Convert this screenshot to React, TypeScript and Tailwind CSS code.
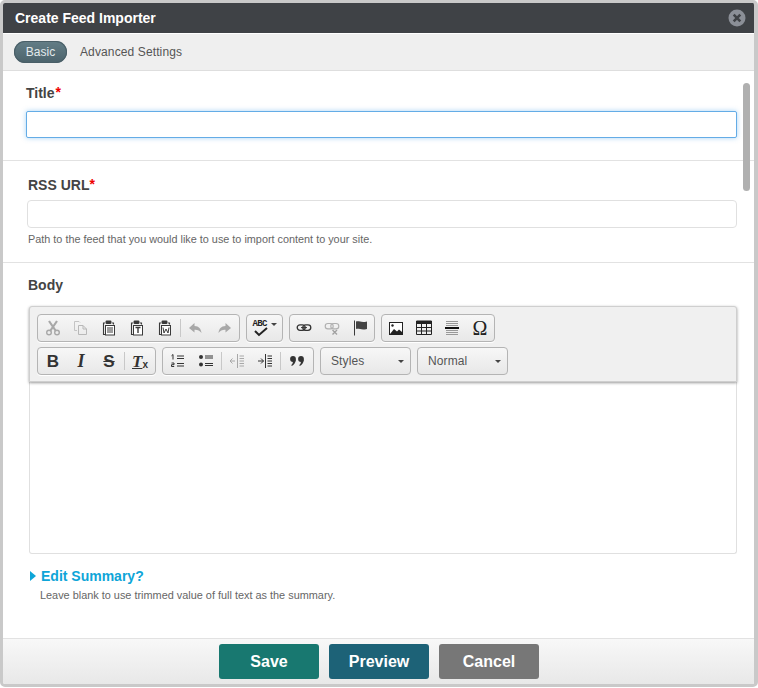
import React from "react";

const D = "#3a3a3a";
const G = "#a8a8a8";
const Ic = ({ children }: { children: React.ReactNode }) => (
  <svg width="16" height="16" viewBox="0 0 16 16" fill="none">{children}</svg>
);
const Cut = () => (
  <Ic>
    <path d="M4 1 L10.5 10.5 M12 1 L5.5 10.5" stroke={G} strokeWidth="2.2" />
    <circle cx="4" cy="12.5" r="2.3" stroke={G} strokeWidth="1.4" />
    <circle cx="12" cy="12.5" r="2.3" stroke={G} strokeWidth="1.4" />
  </Ic>
);
const Copy = () => (
  <Ic>
    <path d="M1.5 1.5 H6 L7 2.5 M1.5 1.5 V10.5 H4" stroke="#c4c4c4" />
    <path d="M5.5 5.5 H10 L13.5 9 V14.5 H5.5 Z M10 5.5 V9 H13.5" stroke="#b8b8b8" />
  </Ic>
);
const Paste = ({ mark }: { mark: "lines" | "T" | "W" }) => (
  <Ic>
    <path d="M4 3 H2.5 V14.5 H4 M11 3 H12.5 V4.5" stroke={D} strokeWidth="1.1" />
    <rect x="4.5" y="0.5" width="6" height="3.5" rx="1.2" fill={D} />
    <rect x="4.5" y="5.5" width="9" height="9.5" fill="#fff" stroke={D} />
    {mark === "lines" && <path d="M6 8 H12 M6 10 H12 M6 12 H12" stroke={D} />}
    {mark === "T" && <path d="M6.5 7.5 H11.5 M9 7.5 V13" stroke={D} strokeWidth="1.4" />}
    {mark === "W" && <path d="M6 7.5 L7 13 L9 9 L11 13 L12 7.5" stroke={D} />}
  </Ic>
);
const Undo = () => (
  <Ic>
    <path d="M6.5 3 L1 8 L6.5 12.5 V9.7 C9.5 9.5 11.5 10.5 13.5 13 C13 9 11 6.2 6.5 6 Z" fill={G} />
  </Ic>
);
const Redo = () => (
  <Ic>
    <path d="M9.5 3 L15 8 L9.5 12.5 V9.7 C6.5 9.5 4.5 10.5 2.5 13 C3 9 5 6.2 9.5 6 Z" fill={G} />
  </Ic>
);
const Link = () => (
  <Ic>
    <rect x="1.2" y="4.8" width="8" height="5.6" rx="2.8" stroke="#333" strokeWidth="1.3" />
    <rect x="6.8" y="4.8" width="8" height="5.6" rx="2.8" stroke="#333" strokeWidth="1.3" />
    <path d="M5 7.6 H11" stroke="#333" />
  </Ic>
);
const Unlink = () => (
  <Ic>
    <rect x="1.2" y="3.5" width="8" height="5.4" rx="2.7" stroke="#b0b0b0" strokeWidth="1.1" />
    <rect x="6.8" y="3.5" width="8" height="5.4" rx="2.7" stroke="#b0b0b0" strokeWidth="1.1" />
    <path d="M8.5 10 L13 14.5 M13 10 L8.5 14.5" stroke="#a0a0a0" strokeWidth="1.4" />
  </Ic>
);
const Flag = () => (
  <Ic>
    <path d="M2.5 0.5 V15.5" stroke={D} />
    <path d="M4 1.5 C7 0.5 9 3 15 1.5 V9 C9 10.5 7 8 4 9 Z" fill="#444" />
  </Ic>
);
const Image = () => (
  <Ic>
    <rect x="1.5" y="2.5" width="13" height="12" fill="#fff" stroke="#222" />
    <path d="M2 14 L6 9 L9 11.5 L11 9.5 L14 12 V14 Z" fill="#222" />
    <circle cx="4.5" cy="5.5" r="1.2" fill="#222" />
  </Ic>
);
const Table = () => (
  <Ic>
    <rect x="0.5" y="1" width="15" height="3" fill="#222" />
    <path d="M0.5 1 H15.5 V14.5 H0.5 Z M0.5 7.5 H15.5 M0.5 11 H15.5 M5.5 4 V14.5 M10.5 4 V14.5" stroke="#222" />
  </Ic>
);
const HR = () => (
  <Ic>
    <path d="M2 1.5 H14 M2 3.5 H14 M2 5.5 H14 M2 10.5 H14 M2 12.5 H14 M2 14.5 H14" stroke="#999" />
    <path d="M1 8 H15" stroke="#111" strokeWidth="2" />
  </Ic>
);
const OL = () => (
  <Ic>
    <path d="M7 3 H14 M7 5.5 H14 M7 10.5 H14 M7 13 H14" stroke="#333" strokeWidth="1.2" />
    <path d="M3 1.5 V6.5 M1.5 2.8 L3 1.5" stroke="#333" />
    <path d="M1.5 10 H4 V11.7 H1.5 V13.5 H4.2" stroke="#333" />
  </Ic>
);
const UL = () => (
  <Ic>
    <circle cx="3" cy="4" r="2" fill="#333" />
    <circle cx="3" cy="11.5" r="2" fill="#333" />
    <path d="M7 3 H15 M7 5 H15 M7 10.5 H15 M7 12.5 H15" stroke="#333" />
  </Ic>
);
const Outdent = () => (
  <Ic>
    <path d="M8.5 1 V15" stroke={G} />
    <path d="M10.5 3 H15 M10.5 5.5 H15 M10.5 8 H15 M10.5 10.5 H15 M10.5 13 H15" stroke={G} />
    <path d="M1 8 H6 M1 8 L3.5 5.5 M1 8 L3.5 10.5" stroke={G} />
  </Ic>
);
const Indent = () => (
  <Ic>
    <path d="M8.5 1 V15" stroke="#333" />
    <path d="M10.5 3 H15 M10.5 5.5 H15 M10.5 8 H15 M10.5 10.5 H15 M10.5 13 H15" stroke="#333" />
    <path d="M1 8 H6.5 M6.5 8 L4 5.5 M6.5 8 L4 10.5" stroke="#333" />
  </Ic>
);
const Quote = () => (
  <Ic>
    <circle cx="4" cy="6" r="2.9" fill="#333" />
    <path d="M6.8 6.5 C6.8 9.5 5 12 2.8 13 L2.3 12 C3.6 11 4 9.5 4 8 Z" fill="#333" />
    <circle cx="12" cy="6" r="2.9" fill="#333" />
    <path d="M14.8 6.5 C14.8 9.5 13 12 10.8 13 L10.3 12 C11.6 11 12 9.5 12 8 Z" fill="#333" />
  </Ic>
);
const Caret = () => <span className="border-x-[3px] border-t-[3px] border-x-transparent border-t-[#444]" />;

const Btn = ({ children, w = "w-[28px]" }: { children: React.ReactNode; w?: string }) => (
  <span className={`flex h-full items-center justify-center ${w}`}>{children}</span>
);
const Sep = () => <span className="mx-[1px] h-[18px] w-px shrink-0 bg-[#c8c8c8]" />;
const Group = ({ children, flush }: { children: React.ReactNode; flush?: boolean }) => (
  <div
    className={`flex h-[28px] items-center rounded-[4px] border border-[#b4b4b4] bg-linear-to-b from-[#f7f7f7] to-[#e8e8e8] shadow-[0_1px_0_#fff] ${flush ? "" : "px-px"}`}
  >
    {children}
  </div>
);
const Combo = ({ label }: { label: string }) => (
  <div className="flex h-[28px] w-[91px] items-center justify-between rounded-[4px] border border-[#b4b4b4] bg-linear-to-b from-[#f7f7f7] to-[#e8e8e8] pr-[6px] pl-[10px] text-[12px] tracking-[0.1px] text-[#555]">
    {label}
    <Caret />
  </div>
);
const Req = ({ gap }: { gap?: boolean }) => (
  <span className={`relative -top-[1px] text-[#ee0000] ${gap ? "ml-px" : ""}`}>*</span>
);

export default function App() {
  return (
    <div className="h-[688px] w-[758px] bg-white font-['Liberation_Sans',Arial,sans-serif] text-[#444]">
      <div className="flex h-[687px] flex-col overflow-hidden rounded-[5px] border-[3px] border-r-4 border-[#c9c9c9] bg-white">
        <header className="flex h-[30px] shrink-0 items-center justify-between bg-[#3f4246] pr-[8px] pl-[12px]">
          <h1 className="text-[14px] font-bold text-white">Create Feed Importer</h1>
          <svg width="18" height="18" viewBox="0 0 18 18">
            <circle cx="9" cy="9" r="8.5" fill="#8b8f97" />
            <path d="M5.7 5.7 L12.3 12.3 M12.3 5.7 L5.7 12.3" stroke="#3f4246" strokeWidth="2.6" />
          </svg>
        </header>
        <nav className="mt-px flex h-[37px] shrink-0 items-center gap-[13px] border-b border-[#dedede] bg-[#efefef] pl-[11px] text-[12px]">
          <span className="flex h-[22px] w-[53px] items-center justify-center rounded-full bg-linear-to-b from-[#647e87] to-[#4c636c] text-[#e4eaec] shadow-[inset_0_0_0_1px_#4a5f68]">
            Basic
          </span>
          <span className="tracking-[0.12px] text-[#555]">Advanced Settings</span>
        </nav>
        <main className="relative min-h-0 flex-1 bg-white">
          <section className="h-[90px] border-b border-[#e2e2e2] pt-[13px] pr-[17px] pl-[23px]">
            <label className="block text-[14px] leading-[18px] font-bold">Title<Req gap /></label>
            <input className="mt-[9px] block h-[27px] w-full rounded-[2px] border border-[#64ace6] bg-white shadow-[0_0_5px_rgba(82,168,236,0.5)] outline-none" />
          </section>
          <section className="h-[102px] border-b border-[#e2e2e2] pt-[15px] pr-[17px] pl-[24px]">
            <label className="block pl-px text-[14px] leading-[18px] font-bold">RSS URL<Req /></label>
            <input className="mt-[6px] block h-[28px] w-full rounded-[4px] border border-[#e0e0e0] bg-white outline-none" />
            <p className="mt-[4px] pl-px text-[10.85px] leading-[14px] text-[#666]">
              Path to the feed that you would like to use to import content to your site.
            </p>
          </section>
          <section className="pt-[13px] pr-[17px] pl-[26px]">
            <label className="-ml-px block h-[18px] text-[14px] leading-[18px] font-bold">Body</label>
            <div className="relative z-10 mt-[12px] flex h-[76px] flex-col gap-[5px] rounded-t-[3px] border border-[#cfcfcf] bg-[#f0f0f0] pt-[7px] pl-[7px] shadow-[0_1px_3px_rgba(0,0,0,0.4)]">
              <div className="flex gap-[6px]">
                <Group>
                  <Btn><Cut /></Btn>
                  <Btn><Copy /></Btn>
                  <Btn><Paste mark="lines" /></Btn>
                  <Btn><Paste mark="T" /></Btn>
                  <Btn><Paste mark="W" /></Btn>
                  <Sep />
                  <Btn><Undo /></Btn>
                  <Btn><Redo /></Btn>
                </Group>
                <Group>
                  <Btn w="w-[33px]">
                    <span className="relative flex h-[17px] w-[24px] items-start font-['Liberation_Mono',monospace] text-[9px] leading-[9px] font-bold tracking-[-0.6px] text-[#222]">
                      ABC
                      <svg className="absolute top-[7px] left-[1px]" width="14" height="10" viewBox="0 0 14 10" fill="none">
                        <path d="M1 4 L5 8 L13 1" stroke="#222" strokeWidth="2" />
                      </svg>
                      <span className="absolute top-[7px] right-0"><Caret /></span>
                    </span>
                  </Btn>
                </Group>
                <Group flush>
                  <Btn><Link /></Btn>
                  <Btn><Unlink /></Btn>
                  <Btn><Flag /></Btn>
                </Group>
                <Group flush>
                  <Btn><Image /></Btn>
                  <Btn><Table /></Btn>
                  <Btn><HR /></Btn>
                  <Btn><span className="font-['Liberation_Serif',serif] text-[20px] leading-none font-normal text-[#222]">Ω</span></Btn>
                </Group>
              </div>
              <div className="flex gap-[6px]">
                <Group>
                  <Btn><span className="text-[17px] leading-none font-bold text-[#333]">B</span></Btn>
                  <Btn><span className="font-['Liberation_Serif',serif] text-[18px] leading-none font-bold text-[#333] italic">I</span></Btn>
                  <Btn><span className="text-[17px] leading-none font-bold text-[#333] line-through">S</span></Btn>
                  <Sep />
                  <Btn>
                    <span className="font-['Liberation_Serif',serif] text-[17px] leading-none font-bold text-[#333] italic underline">T</span>
                    <span className="mt-[8px] text-[10px] leading-none font-bold text-[#333]">x</span>
                  </Btn>
                </Group>
                <Group>
                  <Btn><OL /></Btn>
                  <Btn><UL /></Btn>
                  <Sep />
                  <Btn><Outdent /></Btn>
                  <Btn><Indent /></Btn>
                  <Sep />
                  <Btn w="w-[30px]"><Quote /></Btn>
                </Group>
                <Combo label="Styles" />
                <Combo label="Normal" />
              </div>
            </div>
            <div className="h-[172px] rounded-b-[3px] border border-t-0 border-[#e0e0e0] bg-white" />
            <div className="mt-[13px] flex items-center gap-[5px] pl-[1px] text-[14px] leading-[18px] font-bold text-[#0ea5d8]">
              <span className="border-y-[5px] border-l-[6px] border-y-transparent border-l-[#0ea5d8]" />
              Edit Summary?
            </div>
            <p className="mt-[3px] pl-[11px] text-[10.9px] leading-[14px] text-[#666]">
              Leave blank to use trimmed value of full text as the summary.
            </p>
          </section>
          <div className="absolute top-[12px] right-[4px] h-[108px] w-[7px] rounded-full bg-[#b0b0b0]" />
        </main>
        <footer className="flex h-[46px] shrink-0 items-start justify-center gap-[10px] border-t border-[#e2e2e2] bg-linear-to-b from-[#f8f8f8] to-[#e8e8e8] pt-[5px] pl-[1px] text-[16px] font-bold text-white">
          <button className="h-[35px] w-[100px] rounded-[3px] bg-[#187870]">Save</button>
          <button className="h-[35px] w-[100px] rounded-[3px] bg-[#1d6277]">Preview</button>
          <button className="h-[35px] w-[100px] rounded-[3px] bg-[#777777]">Cancel</button>
        </footer>
      </div>
    </div>
  );
}
